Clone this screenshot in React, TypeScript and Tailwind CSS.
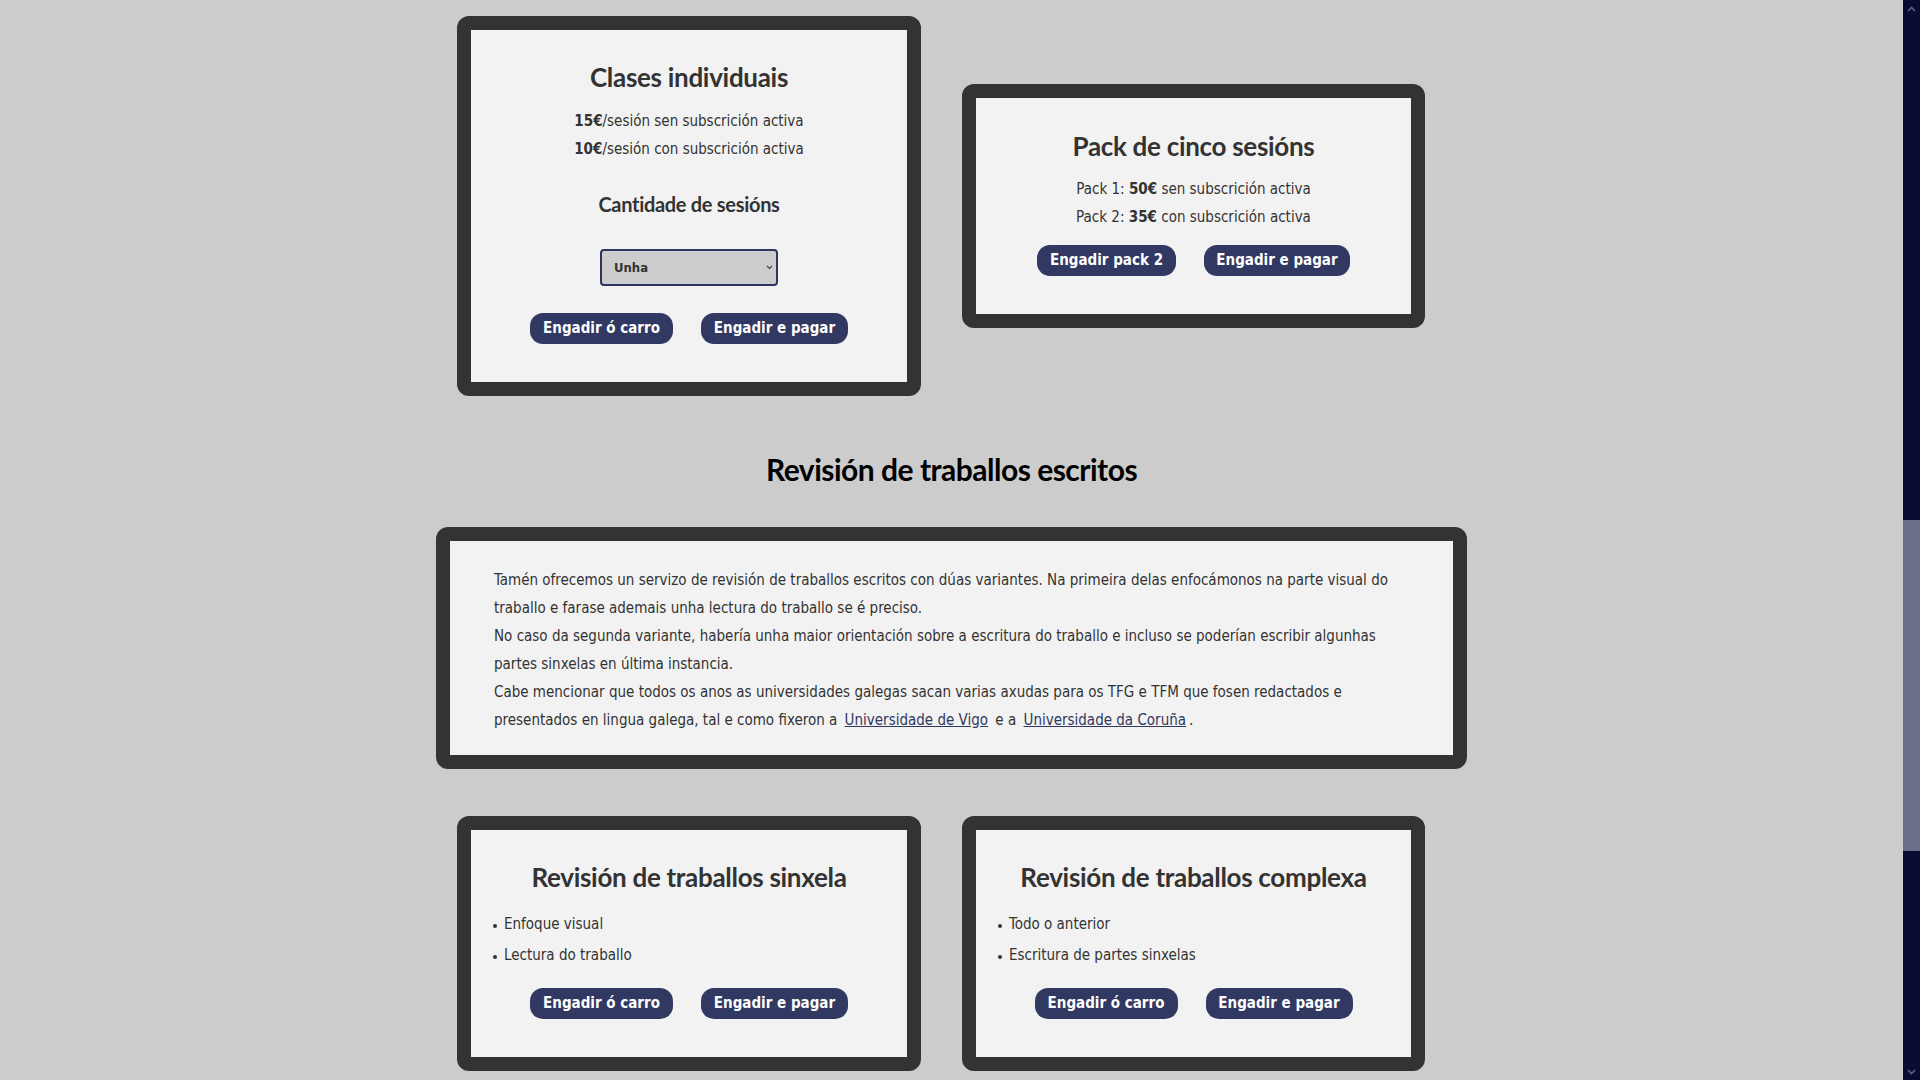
import React from "react";

const HEAD = "[font-family:Lato,'Open_Sans',sans-serif] tracking-[-0.3px]";
const BODY = "[font-family:'DejaVu_Sans_Condensed','DejaVu_Sans',sans-serif]";

function Btn({ label, w }: { label: string; w: string }) {
  return (
    <button
      className={`${w} h-[31px] rounded-[13px] bg-[#313862] text-white text-[15px] font-bold flex items-center justify-center ${BODY}`}
    >
      {label}
    </button>
  );
}

function Card({ w, className, children }: { w: string; className?: string; children: React.ReactNode }) {
  return (
    <div
      className={`${w} rounded-[12px] border-[14px] border-[#333333] bg-[#f2f2f2] text-[#333333] ${className ?? ""}`}
    >
      {children}
    </div>
  );
}

function Bullet({ children }: { children: React.ReactNode }) {
  return (
    <li className="flex items-center leading-[31px]">
      <span className="ml-[22px] mr-[7px] mt-[2px] h-[4px] w-[4px] rounded-full bg-[#333333]" />
      <span>{children}</span>
    </li>
  );
}

function Scrollbar() {
  return (
    <div className="flex h-screen w-[17px] shrink-0 flex-col bg-[#080c33]">
      <div className="flex h-[17px] items-center justify-center">
        <svg width="9" height="6" viewBox="0 0 9 6">
          <path d="M1 5 L4.5 1.5 L8 5" stroke="#5d6185" strokeWidth="1.6" fill="none" />
        </svg>
      </div>
      <div className="h-[503px]" />
      <div className="h-[331px] bg-[#6b6f88]" />
      <div className="flex-1" />
      <div className="flex h-[17px] items-center justify-center">
        <svg width="9" height="6" viewBox="0 0 9 6">
          <path d="M1 1 L4.5 4.5 L8 1" stroke="#5d6185" strokeWidth="1.6" fill="none" />
        </svg>
      </div>
    </div>
  );
}

export default function App() {
  return (
    <div className={`flex h-screen w-full overflow-hidden bg-[#cccccc] ${BODY}`}>
      <main className="flex flex-1 flex-col items-center pt-[16px]">
        {/* Row 1 */}
        <div className="flex items-center gap-[41px] pr-[21px]">
          <Card w="w-[464px]" className="flex flex-col items-center pt-[31px] pb-[38px]">
            <h3 className={`${HEAD} text-[26px] leading-[32px] font-bold`}>Clases individuais</h3>
            <div className="mt-[14px] text-[15px] leading-[28px] text-center">
              <p>
                <b>15€</b>/sesión sen subscrición activa
              </p>
              <p>
                <b>10€</b>/sesión con subscrición activa
              </p>
            </div>
            <h4 className={`${HEAD} mt-[29px] text-[20px] leading-[24px] font-bold`}>Cantidade de sesións</h4>
            <div className="relative mt-[33px] h-[37px] w-[178px]">
              <select
                defaultValue="1"
                className={`h-[37px] w-[178px] appearance-none rounded-[4px] border-2 border-[#2e3562] bg-[#cccccc] pl-[12px] text-[13px] font-bold text-[#333333] ${BODY}`}
              >
                <option value="1">Unha</option>
                <option value="2">Dúas</option>
                <option value="3">Tres</option>
              </select>
              <svg
                className="pointer-events-none absolute right-[5px] top-[16px]"
                width="7"
                height="5"
                viewBox="0 0 7 5"
              >
                <path d="M1 1 L3.5 3.5 L6 1" stroke="#444444" strokeWidth="1.2" fill="none" />
              </svg>
            </div>
            <div className="mt-[27px] flex gap-[28px]">
              <Btn label="Engadir ó carro" w="w-[143px]" />
              <Btn label="Engadir e pagar" w="w-[147px]" />
            </div>
          </Card>

          <Card w="w-[463px]" className="flex flex-col items-center pt-[32px] pb-[38px]">
            <h3 className={`${HEAD} text-[26px] leading-[32px] font-bold`}>Pack de cinco sesións</h3>
            <div className="mt-[13px] text-[15px] leading-[28px] text-center">
              <p>
                Pack 1: <b>50€</b> sen subscrición activa
              </p>
              <p>
                Pack 2: <b>35€</b> con subscrición activa
              </p>
            </div>
            <div className="mt-[14px] flex gap-[28px]">
              <Btn label="Engadir pack 2" w="w-[139px]" />
              <Btn label="Engadir e pagar" w="w-[146px]" />
            </div>
          </Card>
        </div>

        {/* Heading */}
        <h2 className="[font-family:Lato,'Open_Sans',sans-serif] tracking-[-0.5px] mt-[55px] text-[30px] leading-[36px] font-bold text-black">
          Revisión de traballos escritos
        </h2>

        {/* Big card */}
        <Card w="w-[1031px]" className="mt-[40px] pl-[44px] pr-[30px] pt-[25px] pb-[21px]">
          <div className="text-[15px] leading-[28px] whitespace-nowrap">
            <p>
              Tamén ofrecemos un servizo de revisión de traballos escritos con dúas variantes. Na primeira delas enfocámonos na parte visual do
              <br />
              traballo e farase ademais unha lectura do traballo se é preciso.
            </p>
            <p>
              No caso da segunda variante, habería unha maior orientación sobre a escritura do traballo e incluso se poderían escribir algunhas
              <br />
              partes sinxelas en última instancia.
            </p>
            <p>
              Cabe mencionar que todos os anos as universidades galegas sacan varias axudas para os TFG e TFM que fosen redactados e
              <br />
              presentados en lingua galega, tal e como fixeron a{" "}
              <a href="#" className="mx-[3px] text-[#313862] underline">
                Universidade de Vigo
              </a>{" "}
              e a{" "}
              <a href="#" className="mx-[3px] text-[#313862] underline">
                Universidade da Coruña
              </a>
              .
            </p>
          </div>
        </Card>

        {/* Row 2 */}
        <div className="mt-[47px] flex items-start gap-[41px] pr-[21px]">
          <Card w="w-[464px]" className="flex flex-col pt-[31px] pb-[38px]">
            <h3 className={`${HEAD} text-center text-[26px] leading-[32px] font-bold`}>Revisión de traballos sinxela</h3>
            <ul className="mt-[16px] text-[15px]">
              <Bullet>Enfoque visual</Bullet>
              <Bullet>Lectura do traballo</Bullet>
            </ul>
            <div className="mt-[17px] flex justify-center gap-[28px]">
              <Btn label="Engadir ó carro" w="w-[143px]" />
              <Btn label="Engadir e pagar" w="w-[147px]" />
            </div>
          </Card>

          <Card w="w-[463px]" className="flex flex-col pt-[31px] pb-[38px]">
            <h3 className={`${HEAD} text-center text-[26px] leading-[32px] font-bold`}>Revisión de traballos complexa</h3>
            <ul className="mt-[16px] text-[15px]">
              <Bullet>Todo o anterior</Bullet>
              <Bullet>Escritura de partes sinxelas</Bullet>
            </ul>
            <div className="mt-[17px] flex justify-center gap-[28px]">
              <Btn label="Engadir ó carro" w="w-[143px]" />
              <Btn label="Engadir e pagar" w="w-[147px]" />
            </div>
          </Card>
        </div>
      </main>
      <Scrollbar />
    </div>
  );
}
